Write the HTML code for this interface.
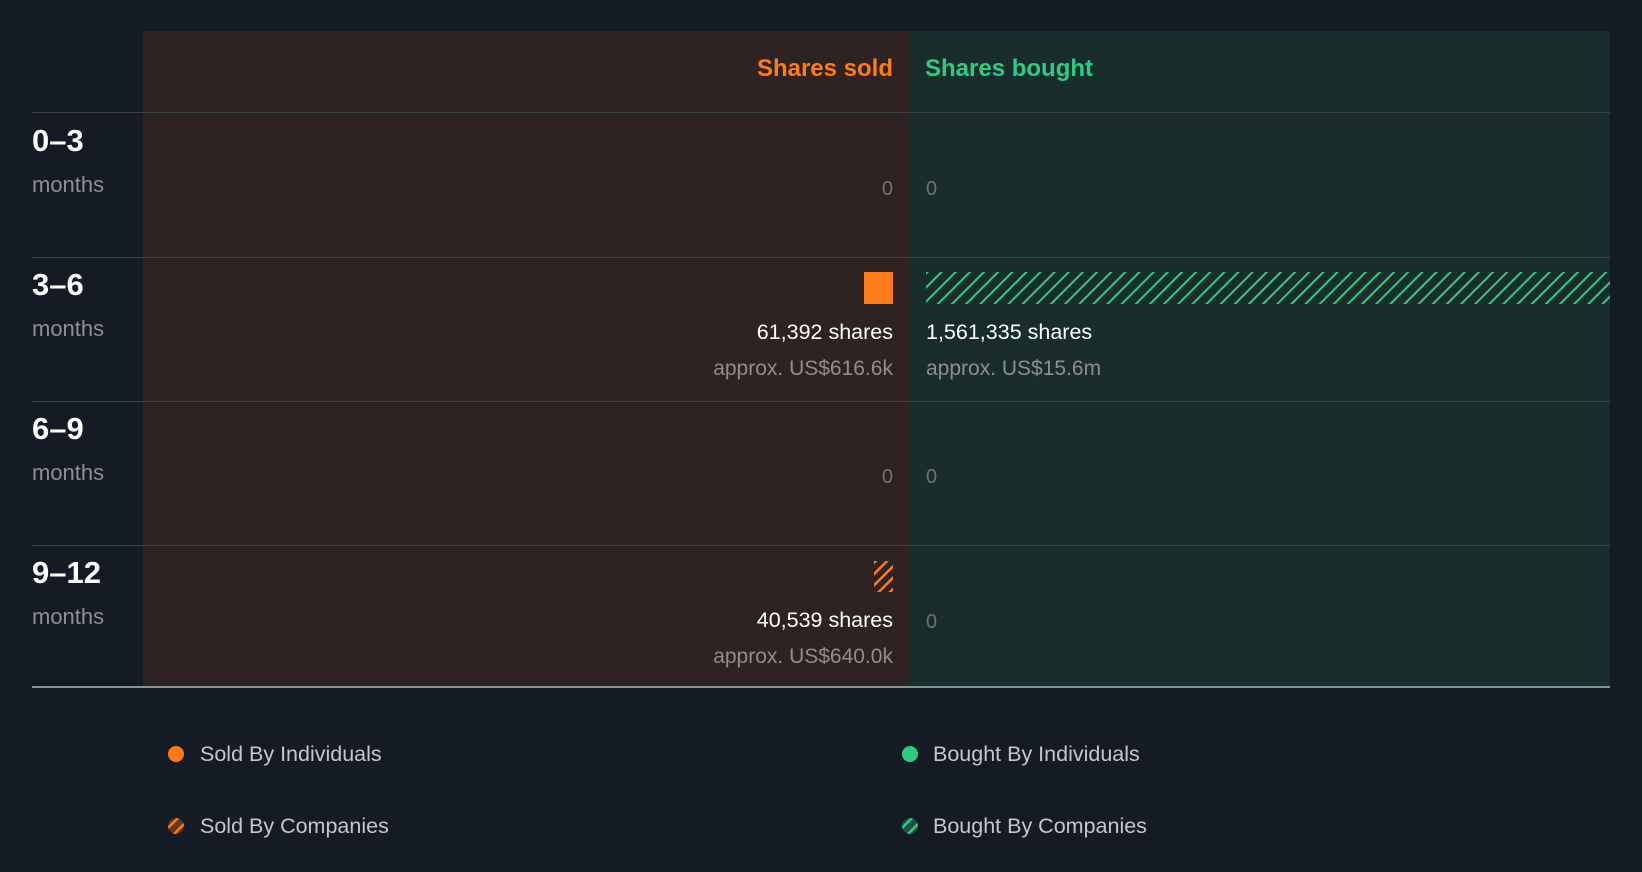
<!DOCTYPE html><html><head><style>
body{margin:0;width:1642px;height:872px;background:#151b24;font-family:"Liberation Sans",sans-serif;position:relative;overflow:hidden}
.a{position:absolute}
.sold{left:143px;width:766px;top:31px;height:656px;background:#2e2322}
.bought{left:909px;width:701px;top:31px;height:656px;background:#182d2c}
.hl{left:32px;width:1578px;height:1px;background:#3d4246}
.lbl{left:32px;color:#fff;font-weight:bold;font-size:31px}
.mo{left:32px;color:#8c9096;font-size:22px}
.r{text-align:right;right:749px}
.l{left:926px}
.z{color:#6f7372;font-size:20px}
.w{color:#fff;font-size:21.5px}
.g{color:#8e8e8e;font-size:21px}
.leg{color:#c4c7cb;font-size:21.5px}
.dot{width:16px;height:16px;border-radius:50%}
</style></head><body>
<div class="a sold"></div><div class="a bought"></div>
<div class="a" style="right:749px;top:55px;color:#ff7b17;font-weight:bold;font-size:24px">Shares sold</div>
<div class="a" style="left:925px;top:55px;color:#2ecc82;font-weight:bold;font-size:24px">Shares bought</div>
<div class="a hl" style="top:112px"></div>
<div class="a hl" style="top:257px"></div>
<div class="a hl" style="top:401px"></div>
<div class="a hl" style="top:545px"></div>
<div class="a hl" style="top:686px;height:2px;background:#8a9197"></div>

<div class="a lbl" style="top:123px">0–3</div><div class="a mo" style="top:172px">months</div>
<div class="a lbl" style="top:267px">3–6</div><div class="a mo" style="top:316px">months</div>
<div class="a lbl" style="top:411px">6–9</div><div class="a mo" style="top:460px">months</div>
<div class="a lbl" style="top:555px">9–12</div><div class="a mo" style="top:604px">months</div>

<div class="a r z" style="top:178px">0</div><div class="a l z" style="top:178px">0</div>
<div class="a r z" style="top:466px">0</div><div class="a l z" style="top:466px">0</div>
<div class="a l z" style="top:611px">0</div>

<div class="a" style="left:864px;top:272px;width:29px;height:32px;background:#ff7b17"></div>
<svg class="a" style="left:926px;top:272px" width="684" height="32"><defs><pattern id="pg" width="10" height="10" patternUnits="userSpaceOnUse" patternTransform="rotate(45)"><rect width="2" height="10" fill="#2ecc82"/></pattern></defs><rect width="684" height="32" fill="url(#pg)"/></svg>
<svg class="a" style="left:874px;top:561px" width="19" height="31"><defs><pattern id="po" width="8" height="8" patternUnits="userSpaceOnUse" patternTransform="rotate(45)"><rect width="2.5" height="8" fill="#ff7b17"/></pattern></defs><rect width="19" height="31" fill="url(#po)"/></svg>

<div class="a r w" style="top:320px">61,392 shares</div>
<div class="a r g" style="top:357px">approx. US$616.6k</div>
<div class="a l w" style="top:320px">1,561,335 shares</div>
<div class="a l g" style="top:357px">approx. US$15.6m</div>
<div class="a r w" style="top:608px">40,539 shares</div>
<div class="a r g" style="top:645px">approx. US$640.0k</div>

<div class="a dot" style="left:168px;top:746px;background:#ff7b17"></div>
<div class="a leg" style="left:200px;top:742px">Sold By Individuals</div>
<div class="a dot" style="left:902px;top:746px;background:#2ecc82"></div>
<div class="a leg" style="left:933px;top:742px">Bought By Individuals</div>
<svg class="a" style="left:168px;top:818px" width="16" height="16"><defs><clipPath id="c"><circle cx="8" cy="8" r="8"/></clipPath></defs><g clip-path="url(#c)"><rect width="16" height="16" fill="#5a3a25"/><path d="M-2 12L12 -2M4 18L18 4" stroke="#ff7b17" stroke-width="2.5"/></g></svg>
<div class="a leg" style="left:200px;top:814px">Sold By Companies</div>
<svg class="a" style="left:902px;top:818px" width="16" height="16"><g clip-path="url(#c)"><rect width="16" height="16" fill="#1f5040"/><path d="M-2 12L12 -2M4 18L18 4" stroke="#2ecc82" stroke-width="2.5"/></g></svg>
<div class="a leg" style="left:933px;top:814px">Bought By Companies</div>
</body></html>
